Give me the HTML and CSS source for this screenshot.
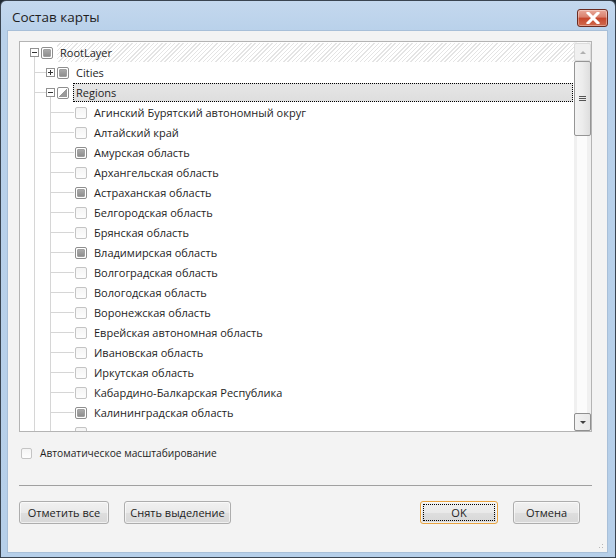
FILE: index.html
```html
<!DOCTYPE html>
<html lang="ru">
<head>
<meta charset="utf-8">
<title>Состав карты</title>
<link rel="stylesheet" href="styles.css">
</head>
<body>
<div class="window">
  <div class="titlebar">
    <span class="title">Состав карты</span>
    <div class="close">
      <svg width="14" height="12" viewBox="0 0 14 12"><path d="M2 1 L12 11 M12 1 L2 11" stroke="#fff" stroke-width="3" stroke-linecap="square"/><path d="M2 1 L12 11 M12 1 L2 11" stroke="#fff" stroke-width="2"/></svg>
    </div>
  </div>
  <div class="client">
    <div class="tree">
      <div class="rows">
        <div class="row root">
          <span class="exp minus"></span><span class="cb full"></span><span class="lbl hatch">RootLayer</span>
        </div>
        <div class="row lvl1 mid">
          <span class="exp plus"></span><span class="cb full"></span><span class="lbl">Cities</span>
        </div>
        <div class="row lvl1 open">
          <span class="exp minus"></span><span class="cb part"></span><span class="lbl sel">Regions</span>
        </div>
        <div class="row leaf"><span class="cb"></span><span class="lbl">Агинский Бурятский автономный округ</span></div>
        <div class="row leaf"><span class="cb"></span><span class="lbl">Алтайский край</span></div>
        <div class="row leaf"><span class="cb full"></span><span class="lbl">Амурская область</span></div>
        <div class="row leaf"><span class="cb"></span><span class="lbl">Архангельская область</span></div>
        <div class="row leaf"><span class="cb full"></span><span class="lbl">Астраханская область</span></div>
        <div class="row leaf"><span class="cb"></span><span class="lbl">Белгородская область</span></div>
        <div class="row leaf"><span class="cb"></span><span class="lbl">Брянская область</span></div>
        <div class="row leaf"><span class="cb full"></span><span class="lbl">Владимирская область</span></div>
        <div class="row leaf"><span class="cb"></span><span class="lbl">Волгоградская область</span></div>
        <div class="row leaf"><span class="cb"></span><span class="lbl">Вологодская область</span></div>
        <div class="row leaf"><span class="cb"></span><span class="lbl">Воронежская область</span></div>
        <div class="row leaf"><span class="cb"></span><span class="lbl">Еврейская автономная область</span></div>
        <div class="row leaf"><span class="cb"></span><span class="lbl">Ивановская область</span></div>
        <div class="row leaf"><span class="cb"></span><span class="lbl">Иркутская область</span></div>
        <div class="row leaf"><span class="cb"></span><span class="lbl">Кабардино-Балкарская Республика</span></div>
        <div class="row leaf"><span class="cb full"></span><span class="lbl">Калининградская область</span></div>
        <div class="row leaf"><span class="cb"></span><span class="lbl"></span></div>
      </div>
      <div class="scrollbar">
        <div class="sbtn"><span class="arrow up"></span></div>
        <div class="thumb"><span class="grip-lines"></span></div>
        <div class="track"></div>
        <div class="sbtn"><span class="arrow down"></span></div>
      </div>
    </div>
    <label class="auto"><span class="cb"></span><span>Автоматическое масштабирование</span></label>
    <div class="sep"></div>
    <div class="buttons">
      <span class="btn w89">Отметить все</span>
      <span class="btn w107">Снять выделение</span>
      <span class="spacer"></span>
      <span class="btn ok"><span class="focus">OK</span></span>
      <span class="btn cancel">Отмена</span>
    </div>
    <span class="sizegrip"></span>
  </div>
</div>
</body>
</html>
```
FILE: styles.css
```css
html, body {
  margin: 0;
  padding: 0;
  background: #202a33;
}
body {
  width: 616px;
  height: 558px;
  overflow: hidden;
  font-family: "Open Sans", "Noto Sans", sans-serif;
}
.window {
  width: 616px;
  height: 558px;
  box-sizing: border-box;
  border: 1px solid #3a4450;
  border-radius: 6px 6px 0 0;
  background: linear-gradient(180deg, #c4d8ee 0px, #b9d1ea 30px, #b6cfe9 100%);
  padding: 0 7px 4px 6px;
  display: flex;
  flex-direction: column;
}
.titlebar {
  height: 29px;
  display: flex;
  align-items: center;
  justify-content: space-between;
}
.title {
  font-family: "Open Sans", sans-serif;
  font-size: 13.5px;
  color: #1e1e1e;
  padding-left: 5px;
  padding-top: 2px;
}
.close {
  width: 31px;
  height: 18px;
  margin-top: 4px;
  box-sizing: border-box;
  border: 1px solid #6b2c22;
  border-radius: 3px;
  background: linear-gradient(180deg, #e9a99a 0%, #d9806d 45%, #c7462c 50%, #cf6a4e 100%);
  display: flex;
  align-items: center;
  justify-content: center;
  box-shadow: inset 0 0 0 1px rgba(255,255,255,0.35);
}
.client {
  flex: 1;
  background: #f3f3f3;
  border: 1px solid #a8bfd8;
  display: flex;
  flex-direction: column;
  padding: 10px 15px 0 11px;
  position: relative;
  font-size: 11px;
  color: #1e1e1e;
}
.tree {
  height: 389px;
  border: 1px solid #b4b4b4;
  background: #fff;
  display: flex;
  overflow: hidden;
  flex: none;
}
.rows {
  flex: 1;
  display: flex;
  flex-direction: column;
}
.row {
  height: 20px;
  flex: none;
  display: flex;
  align-items: center;
  --ln: #d6d6d6;
}
.row.root {
  padding-left: 10px;
  background: linear-gradient(var(--ln), var(--ln)) 14px 15px / 1px 5px no-repeat;
}
.row.lvl1 {
  padding-left: 26px;
}
.row.mid {
  background:
    linear-gradient(var(--ln), var(--ln)) 14px 0 / 1px 100% no-repeat,
    linear-gradient(var(--ln), var(--ln)) 14px 10px / 12px 1px no-repeat;
}
.row.open {
  background:
    linear-gradient(var(--ln), var(--ln)) 14px 0 / 1px 100% no-repeat,
    linear-gradient(var(--ln), var(--ln)) 14px 10px / 12px 1px no-repeat,
    linear-gradient(var(--ln), var(--ln)) 30px 15px / 1px 5px no-repeat;
}
.row.leaf {
  padding-left: 55px;
  background:
    linear-gradient(var(--ln), var(--ln)) 14px 0 / 1px 100% no-repeat,
    linear-gradient(var(--ln), var(--ln)) 30px 0 / 1px 100% no-repeat,
    linear-gradient(var(--ln), var(--ln)) 30px 10px / 24px 1px no-repeat;
}
.exp {
  width: 9px;
  height: 9px;
  box-sizing: border-box;
  border: 1px solid #919191;
  background: #fff;
  margin-right: 2px;
  position: relative;
  flex: none;
}
.exp::before {
  content: "";
  position: absolute;
  left: 1px;
  top: 3px;
  width: 5px;
  height: 1px;
  background: #333;
}
.exp.plus::after {
  content: "";
  position: absolute;
  left: 3px;
  top: 1px;
  width: 1px;
  height: 5px;
  background: #333;
}
.cb {
  width: 12px;
  height: 12px;
  box-sizing: border-box;
  border: 1px solid #c4c4c4;
  border-radius: 2px;
  background: linear-gradient(180deg, #f4f4f4, #fdfdfd);
  flex: none;
  position: relative;
  margin-top: 1px;
}
.cb.full {
  border-color: #8e8e8e;
  background: #fff;
}
.cb.full::after {
  content: "";
  position: absolute;
  left: 1px;
  top: 1px;
  right: 1px;
  bottom: 1px;
  border-radius: 1px;
  background: linear-gradient(180deg, #a9a9a9, #8f8f8f);
  border: 1px solid #a0a0a0;
  box-sizing: border-box;
}
.cb.part {
  border-color: #8e8e8e;
  background: #fff;
}
.cb.part::after {
  content: "";
  position: absolute;
  left: 1px;
  top: 1px;
  right: 1px;
  bottom: 1px;
  background: linear-gradient(135deg, transparent 50%, #9a9a9a 50%);
}
.lbl {
  flex: 1;
  height: 19px;
  margin-top: 1px;
  margin-left: 4px;
  padding-left: 3px;
  padding-bottom: 1px;
  box-sizing: border-box;
  display: flex;
  align-items: center;
  white-space: nowrap;
  font-size: 11px;
  color: #1e1e1e;
}
.lbl.hatch {
  background: repeating-linear-gradient(135deg, #ffffff 0 2px, #e4e4e4 2px 3px);
}
.lbl.sel {
  background: linear-gradient(180deg, #e6e6e6, #dedede);
  border: 1px dotted #000;
  padding-left: 2px;
  padding-bottom: 0;
  margin-right: 1px;
}
.scrollbar {
  width: 17px;
  flex: none;
  display: flex;
  flex-direction: column;
  padding-top: 1px;
  background: linear-gradient(90deg, #f0f0f0 0 3px, #fbfbfb 3px 13px, #f0f0f0 13px);
}
.sbtn {
  height: 18px;
  box-sizing: border-box;
  border: 1px solid #dcdcdc;
  border-radius: 2px;
  background: #f0f0f0;
  display: flex;
  align-items: center;
  justify-content: center;
  flex: none;
}
.sbtn:last-child {
  border-color: #8f8f8f;
  background: linear-gradient(90deg, #f2f2f2, #e8e8e8);
}
.arrow {
  width: 0;
  height: 0;
  border-left: 3px solid transparent;
  border-right: 3px solid transparent;
}
.arrow.up { border-bottom: 3px solid #b0b0b0; }
.arrow.down { border-top: 3px solid #404040; }
.thumb {
  height: 75px;
  box-sizing: border-box;
  border: 1px solid #959595;
  border-radius: 2px;
  background: linear-gradient(90deg, #f3f3f3, #ececec 50%, #dedede);
  display: flex;
  align-items: center;
  justify-content: center;
  flex: none;
}
.grip-lines {
  width: 7px;
  height: 5px;
  background: linear-gradient(#555,#555) 0 0 / 7px 1px no-repeat,
              linear-gradient(#555,#555) 0 2px / 7px 1px no-repeat,
              linear-gradient(#555,#555) 0 4px / 7px 1px no-repeat;
}
.track { flex: 1; }
.auto {
  display: flex;
  align-items: center;
  gap: 8px;
  margin-top: 14px;
  margin-left: 2px;
  height: 14px;
  font-size: 10.2px;
  flex: none;
}
.auto .cb {
  width: 11px;
  height: 11px;
  margin-top: 0;
}
.sep {
  height: 1px;
  background: #a0a0a0;
  margin-top: 25px;
  flex: none;
}
.buttons {
  display: flex;
  margin-top: 15px;
  gap: 15px;
}
.spacer { flex: 1; }
.btn {
  height: 23px;
  box-sizing: border-box;
  border: 1px solid #adadad;
  border-radius: 3px;
  background: linear-gradient(180deg, #f1f1f1 0%, #e9e9e9 50%, #dedede 51%, #d8d8d8 100%);
  display: flex;
  align-items: center;
  justify-content: center;
  font-size: 11px;
  color: #1e1e1e;
  box-shadow: inset 0 0 0 1px rgba(255,255,255,0.6);
}
.w89 { width: 90px; }
.w107 { width: 107px; }
.ok {
  width: 78px;
  border-color: #e8a340;
  padding: 2px;
}
.ok .focus {
  flex: 1;
  align-self: stretch;
  border: 1px dotted #000;
  display: flex;
  align-items: center;
  justify-content: center;
}
.cancel { width: 67px; margin-right: 12px; }
.sizegrip {
  position: absolute;
  right: 2px;
  bottom: 2px;
  width: 10px;
  height: 10px;
  background:
    radial-gradient(circle, #b8b8b8 0.8px, transparent 1px) 0 0 / 3px 3px;
  clip-path: polygon(100% 0, 100% 100%, 0 100%);
}
```
